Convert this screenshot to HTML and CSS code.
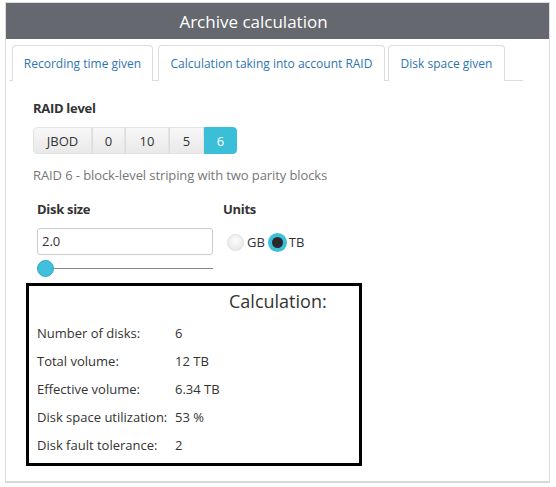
FILE: index.html
```html
<!DOCTYPE html>
<html>
<head>
<meta charset="utf-8">
<link rel="stylesheet" href="styles.css">
</head>
<body>
<div class="panel">
  <div class="header">Archive calculation</div>
  <div class="tabs">
    <div class="tab t1">Recording time given</div>
    <div class="tab t2 active">Calculation taking into account RAID</div>
    <div class="tab t3">Disk space given</div>
  </div>
  <div class="content">
    <div class="label raid-label">RAID level</div>
    <div class="btn-group">
      <div class="btn b-jbod">JBOD</div>
      <div class="btn b-0">0</div>
      <div class="btn b-10">10</div>
      <div class="btn b-5">5</div>
      <div class="btn b-6 active">6</div>
    </div>
    <div class="desc">RAID 6 - block-level striping with two parity blocks</div>
    <div class="row2">
      <div class="col-size">
        <div class="label">Disk size</div>
        <div class="input">2.0</div>
        <div class="slider"><div class="track"></div><div class="thumb"></div></div>
      </div>
      <div class="col-units">
        <div class="label">Units</div>
        <div class="radios">
          <span class="radio"></span><span class="rlabel">GB</span>
          <span class="radio checked"></span><span class="rlabel">TB</span>
        </div>
      </div>
    </div>
    <div class="calc">
      <div class="calc-title">Calculation:</div>
      <div class="calc-row"><span class="k">Number of disks:</span><span class="v">6</span></div>
      <div class="calc-row"><span class="k">Total volume:</span><span class="v">12 TB</span></div>
      <div class="calc-row"><span class="k">Effective volume:</span><span class="v">6.34 TB</span></div>
      <div class="calc-row"><span class="k">Disk space utilization:</span><span class="v">53 %</span></div>
      <div class="calc-row"><span class="k">Disk fault tolerance:</span><span class="v">2</span></div>
    </div>
  </div>
</div>
</body>
</html>
```

FILE: styles.css
```css
html, body {
  margin: 0;
  padding: 0;
  background: #fff;
  font-family: "Open Sans", "Liberation Sans", sans-serif;
  font-size: 13px;
  color: #333;
}
.panel {
  margin: 2px 0 0 5px;
  width: 543px;
  height: 478px;
  border: 1px solid #dcdcdc;
  border-bottom: 2px solid #d8d8d8;
  box-sizing: content-box;
  background: #fff;
}
.header {
  height: 36px;
  background: #65686e;
  color: #fff;
  font-size: 17px;
  line-height: 38px;
  text-align: center;
  padding-right: 48px;
}
.tabs {
  display: flex;
  margin: 6px 26px 0 3px;
  padding-left: 3px;
  height: 35px;
  border-bottom: 1px solid #ddd;
  gap: 4px;
  align-items: stretch;
}
.tab {
  box-sizing: border-box;
  height: 36px;
  border: 1px solid #ddd;
  border-bottom: none;
  border-radius: 4px 4px 0 0;
  color: #2e75b0;
  font-size: 12px;
  line-height: 36px;
  text-align: center;
  background: #fff;
}
.t1 { width: 141px; }
.t2 { width: 227px; margin-left: 1px; }
.t3 { width: 117px; margin-left: -1px; }
.content {
  padding: 0 0 0 27px;
}
.label {
  font-weight: bold;
  font-size: 13px;
  color: #333;
  letter-spacing: -0.3px;
}
.raid-label {
  padding-top: 16px;
  height: 22px;
  line-height: 22px;
}
.btn-group {
  margin-top: 8px;
  display: flex;
  height: 27px;
}
.btn {
  box-sizing: border-box;
  height: 27px;
  line-height: 27px;
  text-align: center;
  background: linear-gradient(#f7f7f7, #e9e9e9);
  border: 1px solid #e3e3e3;
  border-left: 1px solid #dcdcdc;
  color: #333;
}
.b-jbod { width: 59px; border-radius: 4px 0 0 4px; border-left: 1px solid #e3e3e3; }
.b-0 { width: 33px; }
.b-10 { width: 44px; }
.b-5 { width: 35px; }
.b-6 { width: 33px; border-radius: 0 4px 4px 0; }
.btn.active {
  background: #3bbfd9;
  border-color: #3bbfd9;
  color: #fff;
}
.desc {
  margin-top: 12px;
  height: 18px;
  line-height: 18px;
  color: #777;
  letter-spacing: -0.1px;
}
.row2 {
  display: flex;
  margin-top: 15px;
  padding-left: 4px;
}
.col-size {
  width: 186px;
}
.col-size .label, .col-units .label {
  height: 20px;
  line-height: 20px;
}
.input {
  box-sizing: border-box;
  margin-top: 9px;
  width: 176px;
  height: 27px;
  border: 1px solid #ccc;
  border-radius: 3px;
  padding-left: 4px;
  line-height: 25px;
  color: #333;
}
.slider {
  position: relative;
  width: 176px;
  height: 28px;
}
.track {
  position: absolute;
  left: 0;
  right: 0;
  top: 13px;
  height: 1px;
  background: #888;
}
.thumb {
  position: absolute;
  left: 0;
  top: 5px;
  width: 15px;
  height: 15px;
  border-radius: 50%;
  background: #40c0dc;
  border: 1px solid #30a8c4;
}
.col-units .radios {
  margin-top: 8px;
  display: flex;
  align-items: center;
  height: 30px;
}
.radio {
  box-sizing: border-box;
  width: 17px;
  height: 17px;
  border-radius: 50%;
  background: radial-gradient(circle at 50% 40%, #fdfdfd, #e2e2e2);
  border: 1px solid #e0e0e0;
  display: inline-block;
  margin-left: 4px;
}
.radio.checked {
  background: #2a2a2a;
  border: 3px solid #3bbfd9;
  box-shadow: 0 0 0 1px #3bbfd9;
  margin-left: 4px;
}
.rlabel {
  margin-left: 3px;
  color: #333;
}
.calc {
  box-sizing: border-box;
  margin-left: -7px;
  margin-top: 0;
  width: 336px;
  height: 183px;
  border: 3px solid #000;
  padding: 3px 0 0 8px;
}
.calc-title {
  padding-left: 192px;
  font-size: 18px;
  line-height: 24px;
  height: 30px;
  color: #333;
}
.calc-row {
  display: flex;
  height: 28px;
  line-height: 28px;
  color: #333;
}
.calc-row .k {
  width: 138px;
}
```
